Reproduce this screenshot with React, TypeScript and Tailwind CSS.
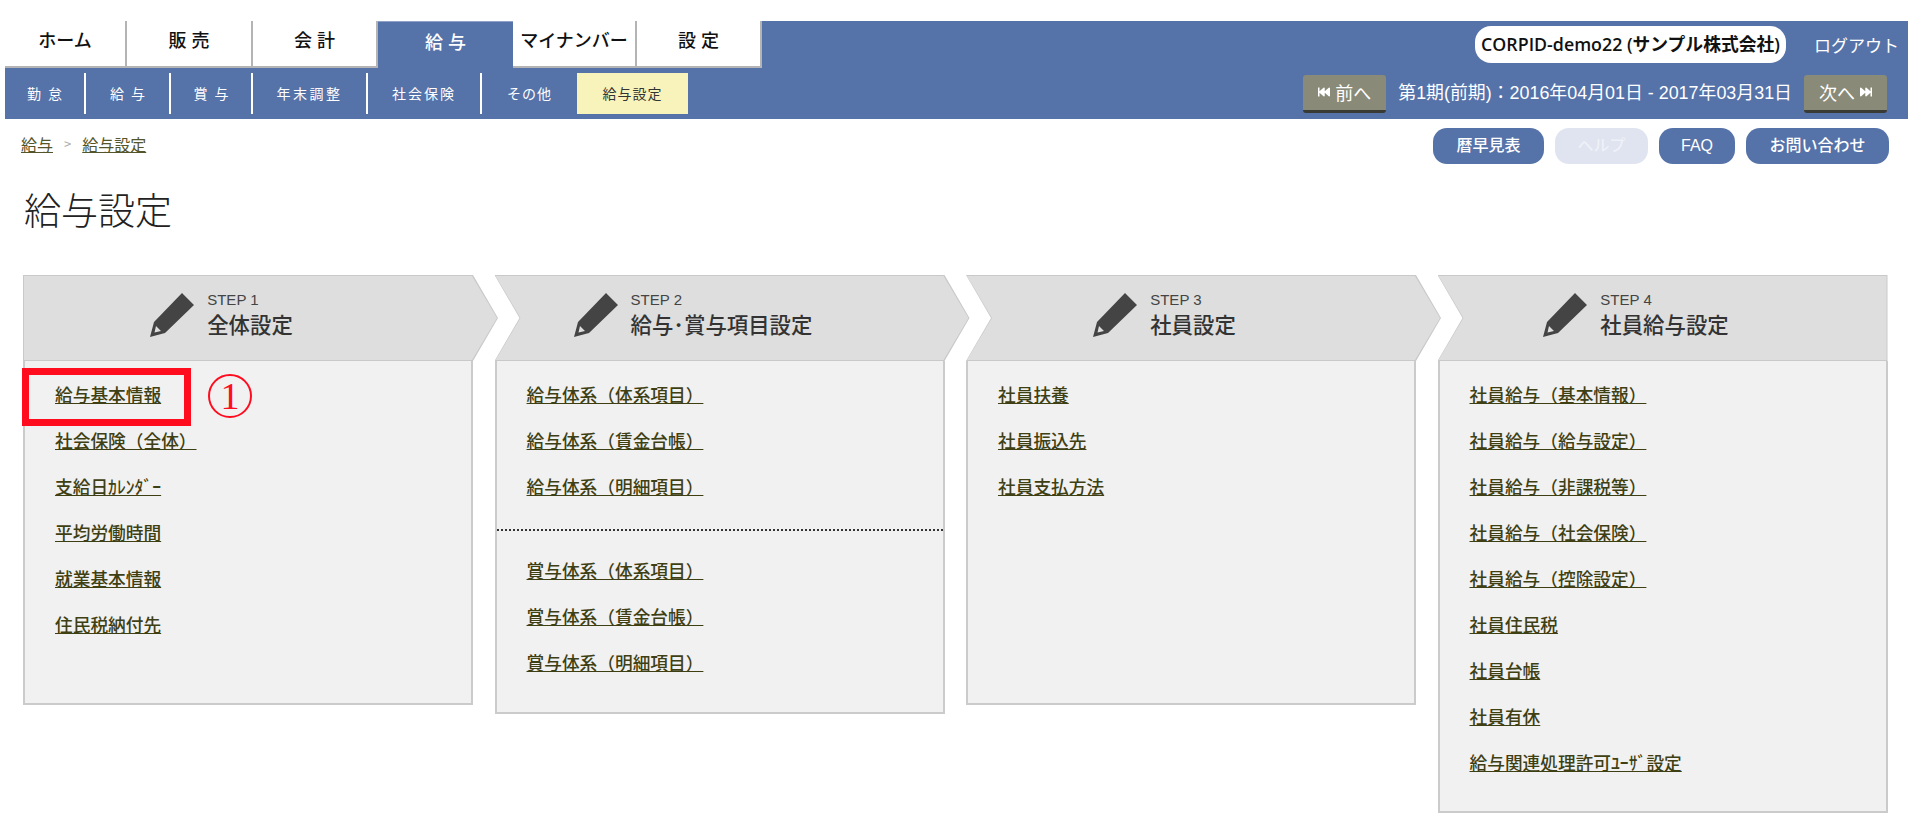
import { FaFastBackward, FaFastForward } from "react-icons/fa";

const tabs = [
  { label: "ホーム", width: "w-[122px]" },
  { label: "販売", width: "w-[126px]", spaced: true },
  { label: "会計", width: "w-[125px]", spaced: true },
  { label: "給与", width: "w-[135px]", spaced: true, active: true },
  { label: "マイナンバー", width: "w-[124px]" },
  { label: "設定", width: "w-[125px]", spaced: true },
];

const subTabs = [
  { label: "勤怠", width: "w-[81px]", spacing: "tracking-[7px] pl-[7px]" },
  { label: "給与", width: "w-[85px]", spacing: "tracking-[7px] pl-[7px]" },
  { label: "賞与", width: "w-[82px]", spacing: "tracking-[7px] pl-[7px]" },
  { label: "年末調整", width: "w-[115px]", spacing: "tracking-[2.5px]" },
  { label: "社会保険", width: "w-[114px]", spacing: "tracking-[2px]" },
  { label: "その他", width: "w-[95px]", spacing: "tracking-[1px]", last: true },
];

const steps = [
  {
    step: "STEP 1",
    title: "全体設定",
    height: "h-[344px]",
    groups: [["給与基本情報", "社会保険（全体）", "支給日ｶﾚﾝﾀﾞｰ", "平均労働時間", "就業基本情報", "住民税納付先"]],
  },
  {
    step: "STEP 2",
    title: "給与･賞与項目設定",
    height: "h-[353px]",
    groups: [
      ["給与体系（体系項目）", "給与体系（賃金台帳）", "給与体系（明細項目）"],
      ["賞与体系（体系項目）", "賞与体系（賃金台帳）", "賞与体系（明細項目）"],
    ],
  },
  {
    step: "STEP 3",
    title: "社員設定",
    height: "h-[344px]",
    groups: [["社員扶養", "社員振込先", "社員支払方法"]],
  },
  {
    step: "STEP 4",
    title: "社員給与設定",
    height: "h-[452px]",
    groups: [
      [
        "社員給与（基本情報）",
        "社員給与（給与設定）",
        "社員給与（非課税等）",
        "社員給与（社会保険）",
        "社員給与（控除設定）",
        "社員住民税",
        "社員台帳",
        "社員有休",
        "給与関連処理許可ﾕｰｻﾞ設定",
      ],
    ],
  },
];

function PencilIcon() {
  return (
    <svg viewBox="0 0 44 44" className="size-[44px] shrink-0">
      <path fill="#444" fillRule="evenodd" d="M32 0 44 12 15 40 0 44 4 29ZM6 33 4.500 39.500 11 38Z" />
    </svg>
  );
}

function PeriodButton({ children }: { children: React.ReactNode }) {
  return (
    <button className="flex h-[38px] w-[83px] items-center justify-center gap-[5px] rounded-[3px] border-b-[3px] border-[#3a3a34] bg-[#8a8a78] text-[18px] text-white">
      {children}
    </button>
  );
}

function HeaderBar() {
  return (
    <div className="ml-[5px] w-[1903px] bg-[#5572a9]">
      <div className="flex h-[47px] justify-between">
        <div className="flex">
          {tabs.map((tab) => (
            <div
              key={tab.label}
              className={`flex items-center justify-center pb-[8px] text-[18px] font-medium ${tab.width} ${
                tab.active
                  ? "border-t border-[#8fa3c8] text-white"
                  : "border-r-2 border-b-2 border-[#b4b4b4] bg-white text-[#111]"
              } ${tab.spaced ? "pl-[5px] tracking-[5px]" : ""}`}
            >
              {tab.label}
            </div>
          ))}
        </div>
        <div className="flex items-center pr-[9px]">
          <div className="flex h-[37px] w-[311px] items-center justify-center whitespace-nowrap rounded-[16px] bg-white font-['Open_Sans','Noto_Sans_CJK_JP',sans-serif] text-[17.8px] font-semibold text-[#111]">
            CORPID-demo22 (サンプル株式会社)
          </div>
          <span className="ml-[28px] pt-px text-[17px] text-white">ログアウト</span>
        </div>
      </div>
      <div className="flex h-[51px] items-center justify-between pr-[21px]">
        <div className="flex h-[41px]">
          {subTabs.map((tab) => (
            <div
              key={tab.label}
              className={`flex items-center justify-center text-[14px] text-white ${tab.width} ${tab.spacing} ${
                tab.last ? "" : "border-r-2 border-white"
              }`}
            >
              {tab.label}
            </div>
          ))}
          <div className="flex w-[111px] items-center justify-center bg-[#f7f3bb] text-[14px] tracking-[1px] text-[#333]">
            給与設定
          </div>
        </div>
        <div className="flex items-center text-white">
          <PeriodButton>
            <FaFastBackward className="size-[12px]" />
            前へ
          </PeriodButton>
          <span className="mx-[12px] whitespace-nowrap font-['Liberation_Sans','Noto_Sans_CJK_JP',sans-serif] text-[17.9px]">
            第1期(前期)：2016年04月01日 - 2017年03月31日
          </span>
          <PeriodButton>
            次へ
            <FaFastForward className="size-[12px]" />
          </PeriodButton>
        </div>
      </div>
    </div>
  );
}

function Toolbar() {
  return (
    <div className="mt-[8px] flex h-[37px] items-center justify-between pl-[21px] pr-[31px]">
      <div className="flex items-center pb-[3px] text-[16px] text-[#55552a]">
        <a className="underline">給与</a>
        <span className="mx-[11px] text-[13px] text-[#aaa]">&gt;</span>
        <a className="underline">給与設定</a>
      </div>
      <div className="flex gap-[11px] font-['Liberation_Sans','Noto_Sans_CJK_JP',sans-serif] text-[16px] font-medium text-white">
        <button className="h-[36px] w-[111px] rounded-[14px] bg-[#5572a9]">暦早見表</button>
        <button className="h-[36px] w-[93px] rounded-[14px] bg-[#dfe4f0] text-[#eef1f7]">ヘルプ</button>
        <button className="h-[36px] w-[76px] rounded-[14px] bg-[#5572a9]">FAQ</button>
        <button className="h-[36px] w-[143px] rounded-[14px] bg-[#5572a9]">お問い合わせ</button>
      </div>
    </div>
  );
}

function StepColumn({ item, index }: { item: (typeof steps)[number]; index: number }) {
  const first = index === 0;
  const last = index === steps.length - 1;
  const shape = first
    ? "[clip-path:polygon(0_0,calc(100%-25px)_0,100%_50%,calc(100%-25px)_100%,0_100%)]"
    : last
      ? "[clip-path:polygon(0_0,100%_0,100%_100%,0_100%,25px_50%)]"
      : "[clip-path:polygon(0_0,calc(100%-25px)_0,100%_50%,calc(100%-25px)_100%,0_100%,25px_50%)]";

  return (
    <div className="relative w-[450px] shrink-0">
      <div className={`h-[86px] bg-[#c9c9c9] p-px ${shape} ${last ? "w-[450px]" : "w-[475px]"}`}>
        <div className={`h-full w-full bg-[#dedede] ${shape}`}>
          <div className="flex h-full w-[450px] items-center justify-center gap-[13px] pb-[6px] pr-[55px]">
            <PencilIcon />
            <div>
              <div className="font-['Liberation_Sans',sans-serif] text-[15px] leading-[18px] text-[#444]">{item.step}</div>
              <div className="text-[21.4px] font-medium leading-[30px] text-[#333]">{item.title}</div>
            </div>
          </div>
        </div>
      </div>
      <div className={`border-2 border-t-0 border-[#cbcbcb] bg-[#f1f1f1] pt-[10px] ${item.height}`}>
        {item.groups.map((links, groupIndex) => (
          <div key={groupIndex} className={groupIndex > 0 ? "mt-[20px] border-t-2 border-dotted border-[#333] pt-[16px]" : ""}>
            {links.map((link) => (
              <div key={link} className="flex h-[46px] items-center pl-[30px]">
                <a className="text-[17.7px] font-medium text-[#3f3f14] underline">{link}</a>
              </div>
            ))}
          </div>
        ))}
      </div>
      {first && (
        <>
          <div className="absolute left-[-1px] top-[93px] h-[58px] w-[169px] border-[7px] border-[#ff0d1f]" />
          <span className="absolute left-[185px] top-[99px] flex size-[44px] items-center justify-center rounded-full border-[2.5px] border-[#ff0d1f] font-['Liberation_Serif',serif] text-[38px] leading-none text-[#ff0d1f]">
            1
          </span>
        </>
      )}
    </div>
  );
}

export default function App() {
  return (
    <div className="h-[829px] overflow-hidden bg-white pt-[21px] font-['Noto_Sans_CJK_JP',sans-serif]">
      <HeaderBar />
      <Toolbar />
      <h1 className="mt-[18px] h-[55px] pl-[24px] text-[37px] font-light leading-[55px] text-[#222]">給与設定</h1>
      <div className="mt-[38px] flex gap-[21.5px] pl-[23px]">
        {steps.map((item, index) => (
          <StepColumn key={item.step} item={item} index={index} />
        ))}
      </div>
    </div>
  );
}
